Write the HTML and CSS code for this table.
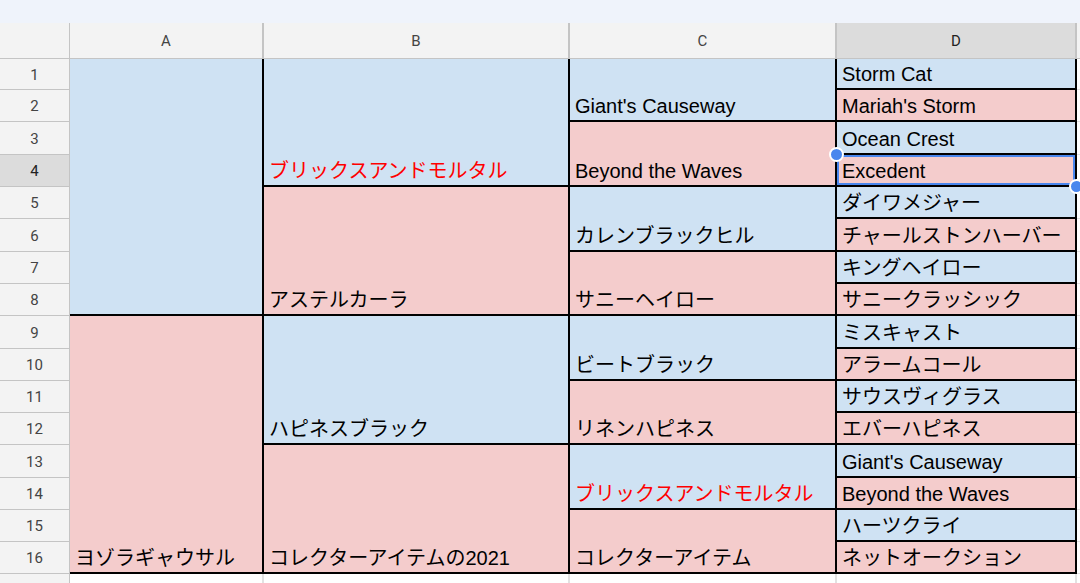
FILE: index.html
```html
<!DOCTYPE html>
<html lang="ja">
<head>
    <meta charset="UTF-8">
    <title>血統表</title>
    <link rel="stylesheet" href="styles.css">
</head>
<body>
    <div class="topbar"></div>

    <div class="sheet">
        <!-- column headers -->
        <div class="corner"></div>
        <div class="colhead">A</div>
        <div class="colhead">B</div>
        <div class="colhead">C</div>
        <div class="colhead active">D</div>
        <div class="colhead rest"></div>

        <!-- row 1 -->
        <div class="rowhead">1</div>
        <div class="cell blue span8"></div>
        <div class="cell blue span4 red">ブリックスアンドモルタル</div>
        <div class="cell blue span2">Giant's Causeway</div>
        <div class="cell blue">Storm Cat</div>
        <div class="out"></div>

        <!-- row 2 -->
        <div class="rowhead">2</div>
        <div class="cell pink">Mariah's Storm</div>
        <div class="out"></div>

        <!-- row 3 -->
        <div class="rowhead">3</div>
        <div class="cell pink span2">Beyond the Waves</div>
        <div class="cell blue">Ocean Crest</div>
        <div class="out"></div>

        <!-- row 4 -->
        <div class="rowhead active">4</div>
        <div class="cell pink selected">Excedent<span class="handle tl"></span><span class="handle br"></span></div>
        <div class="out"></div>

        <!-- row 5 -->
        <div class="rowhead">5</div>
        <div class="cell pink span4">アステルカーラ</div>
        <div class="cell blue span2">カレンブラックヒル</div>
        <div class="cell blue">ダイワメジャー</div>
        <div class="out"></div>

        <!-- row 6 -->
        <div class="rowhead">6</div>
        <div class="cell pink">チャールストンハーバー</div>
        <div class="out"></div>

        <!-- row 7 -->
        <div class="rowhead">7</div>
        <div class="cell pink span2">サニーヘイロー</div>
        <div class="cell blue">キングヘイロー</div>
        <div class="out"></div>

        <!-- row 8 -->
        <div class="rowhead">8</div>
        <div class="cell pink">サニークラッシック</div>
        <div class="out"></div>

        <!-- row 9 -->
        <div class="rowhead">9</div>
        <div class="cell pink span8">ヨゾラギャウサル</div>
        <div class="cell blue span4">ハピネスブラック</div>
        <div class="cell blue span2">ビートブラック</div>
        <div class="cell blue">ミスキャスト</div>
        <div class="out"></div>

        <!-- row 10 -->
        <div class="rowhead">10</div>
        <div class="cell pink">アラームコール</div>
        <div class="out"></div>

        <!-- row 11 -->
        <div class="rowhead">11</div>
        <div class="cell pink span2">リネンハピネス</div>
        <div class="cell blue">サウスヴィグラス</div>
        <div class="out"></div>

        <!-- row 12 -->
        <div class="rowhead">12</div>
        <div class="cell pink">エバーハピネス</div>
        <div class="out"></div>

        <!-- row 13 -->
        <div class="rowhead">13</div>
        <div class="cell pink span4">コレクターアイテムの2021</div>
        <div class="cell blue span2 red">ブリックスアンドモルタル</div>
        <div class="cell blue">Giant's Causeway</div>
        <div class="out"></div>

        <!-- row 14 -->
        <div class="rowhead">14</div>
        <div class="cell pink">Beyond the Waves</div>
        <div class="out"></div>

        <!-- row 15 -->
        <div class="rowhead">15</div>
        <div class="cell pink span2">コレクターアイテム</div>
        <div class="cell blue">ハーツクライ</div>
        <div class="out"></div>

        <!-- row 16 -->
        <div class="rowhead">16</div>
        <div class="cell pink">ネットオークション</div>
        <div class="out"></div>

        <!-- row 17 (cut off by the window) -->
        <div class="rowhead"></div>
        <div class="blank"></div>
        <div class="blank"></div>
        <div class="blank"></div>
        <div class="blank"></div>
        <div class="out"></div>
    </div>
</body>
</html>
```

FILE: styles.css
```css
body {
    margin: 0;
    background: #fff;
    overflow: hidden;
    height: 583px;
}
.topbar {
    height: 23px;
    background-color: #eff3fb;
}
.sheet {
    display: grid;
    grid-template-columns: 70px 194px 306px 267px 240px 1fr;
    grid-template-rows: 36px 31px 32px 33px 32px 32px 33px 32px 32px 33px 32px 32px 32px 33px 32px 32px 32px 32px;
}

/* headers */
.corner,
.colhead,
.rowhead {
    box-sizing: border-box;
    background-color: #f3f3f3;
    color: #444;
    font-family: Roboto, 'Liberation Sans', sans-serif;
    font-size: 15px;
    display: flex;
    align-items: center;
    justify-content: center;
}
.corner {
    border-right: 1px solid #c4c4c4;
    border-bottom: 1px solid #c4c4c4;
}
.colhead {
    border-right: 2px solid #c4c4c4;
    border-bottom: 1px solid #c4c4c4;
}
.colhead.rest {
    border-right: none;
}
.rowhead {
    border-right: 1px solid #c4c4c4;
    border-bottom: 1px solid #c4c4c4;
    padding-top: 1px;
}
.colhead.active,
.rowhead.active {
    background-color: #dcdcdc;
    color: #222;
}

/* data cells */
.cell {
    box-sizing: border-box;
    border-right: 2px solid #000;
    border-bottom: 2px solid #000;
    padding: 0 5px 2px;
    display: flex;
    align-items: flex-end;
    font-family: 'Liberation Sans', 'Noto Sans CJK JP', sans-serif;
    font-size: 20px;
    line-height: 24px;
    color: #000;
    white-space: nowrap;
    overflow: hidden;
}
.blue { background-color: #cfe2f3; }
.pink { background-color: #f4cccc; }
.red { color: #ff0000; }
.span2 { grid-row: span 2; }
.span4 { grid-row: span 4; }
.span8 { grid-row: span 8; }

.blank {
    border-right: 2px solid #e2e2e2;
}
.out {
    box-sizing: border-box;
    border-bottom: 1px solid #e2e2e2;
}

/* selected cell D4 */
.selected {
    position: relative;
    overflow: visible;
}
.selected::before {
    content: "";
    position: absolute;
    inset: 0;
    border: 2px solid #4a87ee;
}
.handle {
    position: absolute;
    width: 11px;
    height: 11px;
    border-radius: 50%;
    background: #4a87ee;
    border: 2px solid #fff;
    z-index: 2;
}
.handle.tl {
    left: -8px;
    top: -8px;
}
.handle.br {
    right: -9px;
    bottom: -9px;
}
```
